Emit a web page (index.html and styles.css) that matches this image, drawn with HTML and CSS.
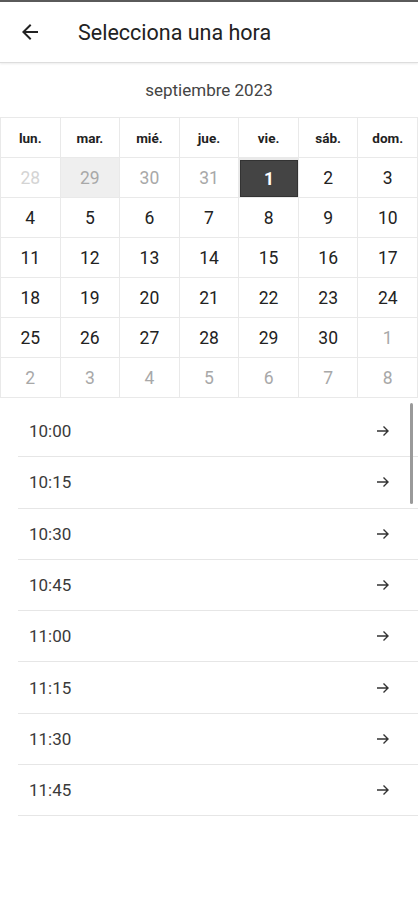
FILE: index.html
```html
<!DOCTYPE html>
<html lang="es">
<head>
  <meta charset="UTF-8" />
  <meta name="viewport" content="width=device-width, initial-scale=1.0"/>
  <title>Selecciona una hora</title>
  <link rel="stylesheet" href="styles.css">
</head>
<body>

  <header class="topbar">
    <button class="back" aria-label="Volver">
      <svg width="24" height="24" viewBox="0 0 24 24"><path d="M20 11H7.83l5.59-5.59L12 4l-8 8 8 8 1.41-1.41L7.83 13H20v-2z" fill="#222"/></svg>
    </button>
    <h1 class="title">Selecciona una hora</h1>
  </header>

  <section class="calendar">
    <div class="month">septiembre 2023</div>
    <div class="grid">
      <div class="wd">lun.</div>
      <div class="wd">mar.</div>
      <div class="wd">mié.</div>
      <div class="wd">jue.</div>
      <div class="wd">vie.</div>
      <div class="wd">sáb.</div>
      <div class="wd">dom.</div>

      <div class="day disabled">28</div>
      <div class="day other today">29</div>
      <div class="day other">30</div>
      <div class="day other">31</div>
      <div class="day selected">1</div>
      <div class="day">2</div>
      <div class="day">3</div>

      <div class="day">4</div>
      <div class="day">5</div>
      <div class="day">6</div>
      <div class="day">7</div>
      <div class="day">8</div>
      <div class="day">9</div>
      <div class="day">10</div>

      <div class="day">11</div>
      <div class="day">12</div>
      <div class="day">13</div>
      <div class="day">14</div>
      <div class="day">15</div>
      <div class="day">16</div>
      <div class="day">17</div>

      <div class="day">18</div>
      <div class="day">19</div>
      <div class="day">20</div>
      <div class="day">21</div>
      <div class="day">22</div>
      <div class="day">23</div>
      <div class="day">24</div>

      <div class="day">25</div>
      <div class="day">26</div>
      <div class="day">27</div>
      <div class="day">28</div>
      <div class="day">29</div>
      <div class="day">30</div>
      <div class="day other">1</div>

      <div class="day other">2</div>
      <div class="day other">3</div>
      <div class="day other">4</div>
      <div class="day other">5</div>
      <div class="day other">6</div>
      <div class="day other">7</div>
      <div class="day other">8</div>
    </div>
  </section>

  <div class="slots">
    <ul class="slot-list">
      <li class="slot"><span>10:00</span><svg class="arrow" width="14" height="14" viewBox="0 0 14 14"><path d="M1 7h11M7.5 2.5L12 7l-4.5 4.5"/></svg></li>
      <li class="slot"><span>10:15</span><svg class="arrow" width="14" height="14" viewBox="0 0 14 14"><path d="M1 7h11M7.5 2.5L12 7l-4.5 4.5"/></svg></li>
      <li class="slot"><span>10:30</span><svg class="arrow" width="14" height="14" viewBox="0 0 14 14"><path d="M1 7h11M7.5 2.5L12 7l-4.5 4.5"/></svg></li>
      <li class="slot"><span>10:45</span><svg class="arrow" width="14" height="14" viewBox="0 0 14 14"><path d="M1 7h11M7.5 2.5L12 7l-4.5 4.5"/></svg></li>
      <li class="slot"><span>11:00</span><svg class="arrow" width="14" height="14" viewBox="0 0 14 14"><path d="M1 7h11M7.5 2.5L12 7l-4.5 4.5"/></svg></li>
      <li class="slot"><span>11:15</span><svg class="arrow" width="14" height="14" viewBox="0 0 14 14"><path d="M1 7h11M7.5 2.5L12 7l-4.5 4.5"/></svg></li>
      <li class="slot"><span>11:30</span><svg class="arrow" width="14" height="14" viewBox="0 0 14 14"><path d="M1 7h11M7.5 2.5L12 7l-4.5 4.5"/></svg></li>
      <li class="slot"><span>11:45</span><svg class="arrow" width="14" height="14" viewBox="0 0 14 14"><path d="M1 7h11M7.5 2.5L12 7l-4.5 4.5"/></svg></li>
    </ul>
    <div class="scrollbar"></div>
  </div>

</body>
</html>
```

FILE: styles.css
```css
body {
  font-family: Roboto, 'Liberation Sans', sans-serif;
  background-color: #fff;
  color: #222;
  margin: 0;
  padding: 0;
  border-top: 2px solid #5a5a5a;
}

.topbar {
  height: 60px;
  display: flex;
  align-items: center;
  border-bottom: 1px solid #ddd;
  box-shadow: 0 1px 2px rgba(0,0,0,0.08);
}

.back {
  background: none;
  border: none;
  padding: 0;
  margin-left: 18px;
  width: 24px;
  height: 24px;
  display: flex;
  align-items: center;
  justify-content: center;
}

.title {
  margin: 0 0 0 36px;
  font-size: 21.5px;
  font-weight: 400;
  color: #222;
}

.month {
  height: 54px;
  display: flex;
  align-items: center;
  justify-content: center;
  font-size: 17px;
  color: #444;
}

.grid {
  display: grid;
  grid-template-columns: repeat(7, 1fr);
  grid-auto-rows: 39px;
  gap: 1px;
  padding: 1px;
  background-color: #e9e9e9;
}

.wd,
.day {
  background: #fff;
  display: flex;
  align-items: center;
  justify-content: center;
}

.wd {
  font-size: 13.5px;
  font-weight: 700;
  color: #222;
}

.day {
  font-size: 17.5px;
  color: #222;
}

.day.other {
  color: #a8a8a8;
}

.day.disabled {
  color: #d4d4d4;
}

.day.today {
  background: #efefef;
}

.day.selected {
  background: #444;
  color: #fff;
  font-weight: 700;
  margin: 2px 0 0 1px;
  border: 1px solid #333;
}

.slots {
  position: relative;
  margin-top: 8px;
}

.slot-list {
  list-style: none;
  margin: 0 0 0 18px;
  padding: 0;
}

.slot {
  height: 50.3px;
  border-bottom: 1px solid #e6e6e6;
  display: flex;
  align-items: center;
  justify-content: space-between;
  padding: 0 28px 0 11px;
  font-size: 17px;
  color: #3a3a3a;
}

.arrow {
  fill: none;
  stroke: #333;
  stroke-width: 1.4;
}

.scrollbar {
  position: absolute;
  top: -3px;
  right: 5px;
  width: 3px;
  height: 101px;
  background: #9a9a9a;
  border-radius: 2px;
}
```
